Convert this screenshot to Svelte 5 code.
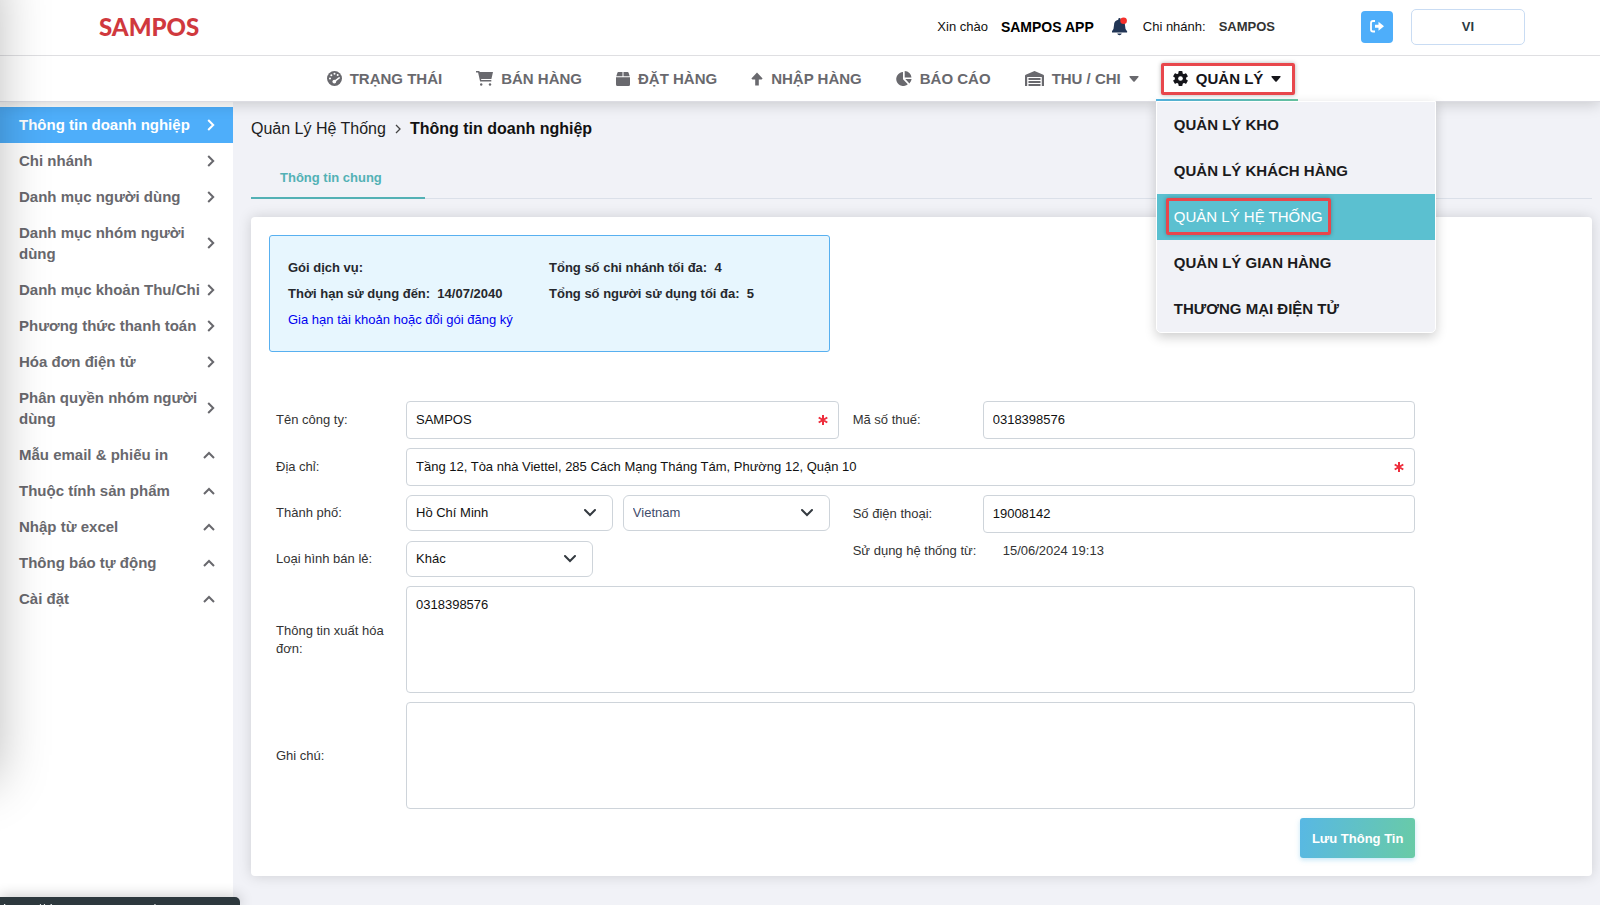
<script>
  const navItems = [
    { label: 'TRẠNG THÁI', icon: 'gauge' },
    { label: 'BÁN HÀNG', icon: 'cart' },
    { label: 'ĐẶT HÀNG', icon: 'box' },
    { label: 'NHẬP HÀNG', icon: 'up' },
    { label: 'BÁO CÁO', icon: 'pie' },
    { label: 'THU / CHI', icon: 'warehouse', caret: true }
  ];

  const manageItems = [
    'QUẢN LÝ KHO',
    'QUẢN LÝ KHÁCH HÀNG',
    'QUẢN LÝ HỆ THỐNG',
    'QUẢN LÝ GIAN HÀNG',
    'THƯƠNG MẠI ĐIỆN TỬ'
  ];

  const sideLinks = [
    'Thông tin doanh nghiệp',
    'Chi nhánh',
    'Danh mục người dùng',
    'Danh mục nhóm người dùng',
    'Danh mục khoản Thu/Chi',
    'Phương thức thanh toán',
    'Hóa đơn điện tử',
    'Phân quyền nhóm người dùng'
  ];

  const sideGroups = [
    'Mẫu email & phiếu in',
    'Thuộc tính sản phẩm',
    'Nhập từ excel',
    'Thông báo tự động',
    'Cài đặt'
  ];

  let menuOpen = $state(true);
  let activeManage = $state('QUẢN LÝ HỆ THỐNG');
  let activeSide = $state('Thông tin doanh nghiệp');

  let form = $state({
    company: 'SAMPOS',
    tax: '0318398576',
    address: 'Tầng 12, Tòa nhà Viettel, 285 Cách Mạng Tháng Tám, Phường 12, Quận 10',
    city: 'Hồ Chí Minh',
    country: 'Vietnam',
    phone: '19008142',
    retail: 'Khác',
    invoice: '0318398576',
    note: ''
  });
</script>

{#snippet icon(name)}
  {#if name === 'gauge'}
    <svg class="icon" width="15" height="15" viewBox="0 0 16 16" aria-hidden="true">
      <circle cx="8" cy="8" r="8" fill="currentColor" />
      <g fill="#fff">
        <circle cx="3.2" cy="8" r="1.1" />
        <circle cx="4.6" cy="4.5" r="1.1" />
        <circle cx="8" cy="3" r="1.1" />
        <circle cx="11.4" cy="4.3" r="1.1" />
        <circle cx="7.8" cy="11.3" r="2" />
      </g>
      <path d="M8 11l5-3.6" stroke="#fff" stroke-width="1.7" stroke-linecap="round" />
    </svg>
  {:else if name === 'cart'}
    <svg class="icon" width="17" height="15" viewBox="0 0 17 15" fill="currentColor" aria-hidden="true">
      <path d="M0 0h3.3l.4 1H17l-1.6 6.9H5l.3 1.2h10v1.5H4.1l-2-9.1H0z" />
      <circle cx="5.2" cy="13.5" r="1.2" />
      <circle cx="14" cy="13.5" r="1.2" />
    </svg>
  {:else if name === 'box'}
    <svg class="icon" width="14" height="14" viewBox="0 0 14 14" fill="currentColor" aria-hidden="true">
      <path d="M2.3 0h4.2v4.2H.3L1.4.8Q1.7 0 2.3 0zM7.5 0h4.2q.6 0 .9.8l1.1 3.4H7.5zM0 5.2h14v7.3q0 1.5-1.5 1.5h-11Q0 14 0 12.5z" />
    </svg>
  {:else if name === 'up'}
    <svg class="icon" width="12" height="14" viewBox="0 0 12 14" fill="currentColor" aria-hidden="true">
      <path d="M6 .6l5.6 5.8-1 1H7.8v6H4.2v-6H1.4l-1-1z" />
    </svg>
  {:else if name === 'pie'}
    <svg class="icon" width="16" height="15" viewBox="0 0 16 15" fill="currentColor" aria-hidden="true">
      <path d="M7 1v7.3l4.8 5A7 7 0 1 1 7 1zM8.7 0a6.8 6.8 0 0 1 6.8 6.6H8.7zM9.3 8h6.3a7 7 0 0 1-2.2 4.4z" />
    </svg>
  {:else if name === 'warehouse'}
    <svg class="icon" width="19" height="15" viewBox="0 0 19 15" fill="currentColor" aria-hidden="true">
      <path d="M9.5 0l8.8 3.7q.7.3.7 1V15h-2.2V6H2.2v9H0V4.7q0-.7.7-1z" />
      <path d="M3.5 7h12v2h-12zM3.5 10h12v2h-12zM3.5 13h12v2h-12z" />
    </svg>
  {:else if name === 'gear'}
    <svg class="icon" width="15" height="15" viewBox="0 0 16 16" aria-hidden="true">
      <g fill="currentColor">
        {#each [0, 60, 120] as turn}
          <rect x="5.8" y="0" width="4.4" height="16" rx="1" transform="rotate({turn} 8 8)" />
        {/each}
        <circle cx="8" cy="8" r="6" />
      </g>
      <circle cx="8" cy="8" r="2.5" fill="#fff" />
    </svg>
  {:else if name === 'caret'}
    <svg class="icon" width="10" height="6" viewBox="0 0 10 6" fill="currentColor" aria-hidden="true">
      <path d="M1 0h8q1 0 .5 1L5.7 5.5q-.7.7-1.4 0L.5 1Q0 0 1 0z" />
    </svg>
  {:else if name === 'right'}
    <svg class="icon" width="8" height="12" viewBox="0 0 8 12" fill="none" stroke="currentColor" stroke-width="2" aria-hidden="true">
      <path d="M1.2 1l5 5-5 5" />
    </svg>
  {:else if name === 'collapse'}
    <svg class="icon" width="12" height="8" viewBox="0 0 12 8" fill="none" stroke="currentColor" stroke-width="2" aria-hidden="true">
      <path d="M1 7l5-5 5 5" />
    </svg>
  {:else if name === 'down'}
    <svg class="select-arrow" width="12" height="8" viewBox="0 0 12 8" fill="none" stroke="currentColor" stroke-width="2" stroke-linecap="round" aria-hidden="true">
      <path d="M1 1l5 5 5-5" />
    </svg>
  {:else if name === 'required'}
    <svg class="required" width="10" height="10" viewBox="0 0 10 10" stroke="#ee2d3c" stroke-width="2" aria-hidden="true">
      <path d="M5 0v10M.7 2.5l8.6 5M9.3 2.5l-8.6 5" />
    </svg>
  {/if}
{/snippet}

<div class="page">
  <header class="topbar">
    <a class="logo" href="#home">SAMPOS</a>
    <div class="account">
      <span>Xin chào</span>
      <strong class="user">SAMPOS APP</strong>
      <button class="bell" aria-label="Notifications">
        <svg width="16" height="20" viewBox="0 0 16 20" aria-hidden="true">
          <path d="M6.3 2.2q0-1.2 1.2-1.2t1.2 1.2v.6q4.3.8 4.3 5.4 0 4 1.900 5.700.5.600.1 1.600H0q-.4-1 .1-1.600Q2 12.200 2 8.200q0-4.600 4.300-5.400zM5.200 16.500h4.600Q9.300 18.300 7.500 18.300t-2.300-1.800z" fill="#213555" />
          <circle cx="11.6" cy="3.8" r="3.3" fill="#f5302b" />
        </svg>
      </button>
      <span>Chi nhánh:</span>
      <strong class="branch">SAMPOS</strong>
    </div>
    <button class="logout" aria-label="Logout">
      <svg width="15" height="13" viewBox="0 0 15 13" aria-hidden="true">
        <path d="M5 1H3Q1 1 1 3v6.5q0 2 2 2h2" fill="none" stroke="#fff" stroke-width="1.8" />
        <path d="M5 4.8h3.5v-3L14 6.3l-5.5 4.5v-3H5z" fill="#fff" />
      </svg>
    </button>
    <button class="lang">VI</button>
  </header>

  <nav class="mainnav">
    {#each navItems as item}
      <a class="nav-item" href="#nav">
        {@render icon(item.icon)}
        <span>{item.label}</span>
        {#if item.caret}{@render icon('caret')}{/if}
      </a>
    {/each}
    <div class="manage">
      <button class="nav-item current" onclick={() => (menuOpen = !menuOpen)}>
        {@render icon('gear')}
        <span>QUẢN LÝ</span>
        {@render icon('caret')}
      </button>
      {#if menuOpen}
        <div class="dropdown">
          {#each manageItems as item}
            <a href="#manage" class:active={item === activeManage} onclick={() => (activeManage = item)}>
              <span>{item}</span>
            </a>
          {/each}
        </div>
      {/if}
    </div>
  </nav>

  <div class="body">
    <aside class="sidebar">
      {#each sideLinks as item}
        <a class="side-item" class:active={item === activeSide} href="#side" onclick={() => (activeSide = item)}>
          <span>{item}</span>
          {@render icon('right')}
        </a>
      {/each}
      {#each sideGroups as item}
        <button class="side-item">
          <span>{item}</span>
          {@render icon('collapse')}
        </button>
      {/each}
    </aside>

    <main>
      <div class="breadcrumb">
        <span>Quản Lý Hệ Thống</span>
        <svg width="6" height="10" viewBox="0 0 6 10" fill="none" stroke="#444" stroke-width="1.3" aria-hidden="true">
          <path d="M1 1l4 4-4 4" />
        </svg>
        <strong>Thông tin doanh nghiệp</strong>
      </div>

      <div class="tabs">
        <button>Thông tin chung</button>
      </div>

      <section class="card">
        <div class="plan">
          <div>Gói dịch vụ:</div>
          <div>Tổng số chi nhánh tối đa:&nbsp; 4</div>
          <div>Thời hạn sử dụng đến:&nbsp; 14/07/2040</div>
          <div>Tổng số người sử dụng tối đa:&nbsp; 5</div>
          <a href="#renew">Gia hạn tài khoản hoặc đổi gói đăng ký</a>
        </div>

        <form onsubmit={(e) => e.preventDefault()}>
          <div class="halves">
            <div class="row">
              <label for="company">Tên công ty:</label>
              <div class="field">
                <input id="company" type="text" bind:value={form.company} />
                {@render icon('required')}
              </div>
            </div>
            <div class="row">
              <label for="tax">Mã số thuế:</label>
              <div class="field"><input id="tax" type="text" bind:value={form.tax} /></div>
            </div>
          </div>

          <div class="row">
            <label for="address">Địa chỉ:</label>
            <div class="field">
              <input id="address" type="text" bind:value={form.address} />
              {@render icon('required')}
            </div>
          </div>

          <div class="halves">
            <div class="stack">
              <div class="row">
                <label for="city">Thành phố:</label>
                <div class="selects">
                  <div class="field">
                    <select id="city" bind:value={form.city}><option>Hồ Chí Minh</option></select>
                    {@render icon('down')}
                  </div>
                  <div class="field">
                    <select class="country" aria-label="Quốc gia" bind:value={form.country}><option>Vietnam</option></select>
                    {@render icon('down')}
                  </div>
                </div>
              </div>
              <div class="row">
                <label for="retail">Loại hình bán lẻ:</label>
                <div class="field retail">
                  <select id="retail" bind:value={form.retail}><option>Khác</option></select>
                  {@render icon('down')}
                </div>
              </div>
            </div>
            <div class="stack">
              <div class="row">
                <label for="phone">Số điện thoại:</label>
                <div class="field"><input id="phone" type="text" bind:value={form.phone} /></div>
              </div>
              <div class="row since">
                <span class="since-label">Sử dụng hệ thống từ:</span>
                <span>15/06/2024 19:13</span>
              </div>
            </div>
          </div>

          <div class="row">
            <label for="invoice">Thông tin xuất hóa đơn:</label>
            <div class="field"><textarea id="invoice" bind:value={form.invoice}></textarea></div>
          </div>
          <div class="row">
            <label for="note">Ghi chú:</label>
            <div class="field"><textarea id="note" bind:value={form.note}></textarea></div>
          </div>

          <button class="save">Lưu Thông Tin</button>
        </form>
      </section>
    </main>
  </div>

  <div class="edge-shadow"></div>
  <div class="status">https://demo.sampos.vn/system</div>
</div>

<style>
  :global(body) {
    background: #f1f2f7;
  }

  .page {
    font-family: 'Liberation Sans', Arial, sans-serif;
    font-size: 13px;
    color: #333;
    min-height: 100vh;
    display: flex;
    flex-direction: column;
  }

  .page * {
    box-sizing: border-box;
  }

  a {
    color: inherit;
    text-decoration: none;
  }

  button {
    font: inherit;
    color: inherit;
    border: none;
    background: none;
    padding: 0;
    cursor: pointer;
  }

  .icon {
    flex: none;
  }

  .topbar {
    position: relative;
    z-index: 3;
    height: 56px;
    display: flex;
    align-items: center;
    background: #fff;
    border-bottom: 1px solid #dfdfe2;
    padding: 0 75px 2px 99px;
  }

  .logo {
    font-family: Lato, sans-serif;
    font-size: 24px;
    font-weight: 900;
    color: #d0393e;
  }

  .account {
    display: flex;
    align-items: center;
    gap: 13px;
    margin-left: auto;
    margin-right: 86px;
    color: #111;
  }

  .user {
    color: #000;
    font-size: 14px;
  }

  .bell {
    display: flex;
    padding: 0 2px 0 5px;
  }

  .branch {
    color: #333;
  }

  .logout {
    width: 32px;
    height: 32px;
    display: flex;
    align-items: center;
    justify-content: center;
    background: #4eaefa;
    border-radius: 4px;
    margin-right: 18px;
  }

  .lang {
    width: 114px;
    height: 36px;
    border: 1px solid #c9dcf3;
    border-radius: 5px;
    font-weight: bold;
    color: #2b3a42;
  }

  .mainnav {
    position: relative;
    z-index: 2;
    height: 46px;
    display: flex;
    justify-content: center;
    background: #fff;
    border-bottom: 1px solid #dcdce2;
    box-shadow: 0 2px 14px rgba(0, 0, 0, 0.18);
    padding-left: 8px;
  }

  .nav-item {
    display: flex;
    align-items: center;
    gap: 8px;
    padding: 0 17px;
    height: 45px;
    font-size: 15px;
    font-weight: bold;
    color: #69696e;
    white-space: nowrap;
  }

  .manage {
    position: relative;
  }

  .nav-item.current {
    position: relative;
    color: #15151a;
  }

  .nav-item.current::before {
    content: '';
    position: absolute;
    left: 0;
    right: 0;
    bottom: 0;
    height: 2px;
    background: linear-gradient(90deg, #55b7e4, #68c9a5);
  }

  .nav-item.current::after {
    content: '';
    position: absolute;
    inset: 7px 3px 6px 5px;
    border: 3px solid #e8474c;
    border-radius: 2px;
    box-shadow: 0 0 4px rgba(0, 0, 0, 0.3);
  }

  .dropdown {
    position: absolute;
    top: 100%;
    left: 0;
    width: 280px;
    background: #f1f2f7;
    border: 1px solid #fff;
    border-radius: 0 0 5px 5px;
    box-shadow: 0 4px 12px rgba(0, 0, 0, 0.2);
  }

  .dropdown a {
    display: flex;
    align-items: center;
    height: 46px;
    padding: 0 0 2px 17px;
    font-size: 15px;
    font-weight: bold;
    color: #1b1b20;
  }

  .dropdown a.active {
    background: #5bc0d0;
    color: #fff;
    font-weight: normal;
  }

  .dropdown a.active span {
    position: relative;
  }

  .dropdown a.active span::after {
    content: '';
    position: absolute;
    inset: -10px -8px;
    border: 3px solid #e8474c;
    border-radius: 2px;
    box-shadow: 0 0 4px rgba(0, 0, 0, 0.3);
  }

  .body {
    flex: 1;
    display: flex;
  }

  .sidebar {
    width: 233px;
    flex: none;
    background: #fff;
    padding-top: 5px;
  }

  .side-item {
    width: 100%;
    min-height: 36px;
    display: flex;
    align-items: center;
    justify-content: space-between;
    gap: 4px;
    padding: 7px 18px 8px 19px;
    font-size: 15px;
    line-height: 21px;
    font-weight: bold;
    color: #68686d;
    text-align: left;
  }

  .side-item.active {
    background: #4eaefa;
    color: #fff;
  }

  main {
    flex: 1;
    min-width: 0;
    padding: 17px 8px 24px 18px;
  }

  .breadcrumb {
    display: flex;
    align-items: center;
    gap: 9px;
    font-size: 16px;
    line-height: 20px;
    color: #1d1d22;
  }

  .breadcrumb strong {
    color: #111;
  }

  .tabs {
    display: flex;
    margin-top: 20px;
    border-bottom: 1px solid #dbe0e9;
  }

  .tabs button {
    height: 40px;
    padding: 0 43px 2px 29px;
    margin-bottom: -1px;
    border-bottom: 2px solid #53b1b5;
    font-weight: bold;
    color: #53b1b5;
  }

  .card {
    margin-top: 18px;
    background: #fff;
    border-radius: 4px;
    box-shadow: 0 0 14px rgba(0, 0, 0, 0.15);
    padding: 18px;
  }

  .plan {
    width: 43%;
    height: 117px;
    display: grid;
    grid-template-columns: 261px 1fr;
    align-content: start;
    row-gap: 6px;
    padding: 22px 18px;
    background: #e7f6fe;
    border: 1px solid #58b0f0;
    border-radius: 3px;
    line-height: 20px;
    font-weight: bold;
    color: #26282d;
  }

  .plan a {
    grid-column: 1 / -1;
    color: #0000f0;
    font-weight: normal;
  }

  form {
    width: 88%;
    display: flex;
    flex-direction: column;
    gap: 9px;
    margin-top: 49px;
    padding: 0 2px 0 7px;
  }

  .halves {
    display: grid;
    grid-template-columns: 1fr 1fr;
    gap: 14px;
  }

  .stack {
    display: flex;
    flex-direction: column;
    gap: 10px;
  }

  .row {
    display: flex;
    align-items: center;
  }

  label {
    width: 130px;
    flex: none;
    padding-right: 12px;
    line-height: 18px;
  }

  .field {
    position: relative;
    flex: 1;
    display: flex;
  }

  .selects {
    flex: 1;
    display: flex;
    gap: 10px;
    padding-right: 9px;
  }

  .retail {
    flex: none;
    width: 187px;
  }

  input,
  select,
  textarea {
    width: 100%;
    font: inherit;
    color: #111;
    background: #fff;
    border: 1px solid #ced4da;
    border-radius: 4px;
    padding: 0 9px;
    outline: none;
  }

  input {
    height: 38px;
    padding-bottom: 1px;
  }

  select {
    height: 36px;
    border-radius: 6px;
    appearance: none;
    padding-bottom: 1px;
  }

  .country {
    color: #3f4d6b;
  }

  textarea {
    display: block;
    height: 107px;
    padding-top: 10px;
    resize: none;
  }

  .field :global(.required) {
    position: absolute;
    right: 11px;
    top: 14px;
  }

  .field :global(.select-arrow) {
    position: absolute;
    right: 17px;
    top: 14px;
    color: #343a40;
    pointer-events: none;
  }

  .since {
    line-height: 16px;
  }

  .since-label {
    width: 150px;
    flex: none;
  }

  .save {
    align-self: flex-end;
    height: 40px;
    padding: 0 12px;
    border-radius: 3px;
    background: linear-gradient(100deg, #58b8e4, #69cba6);
    box-shadow: 0 2px 5px rgba(88, 184, 228, 0.35);
    color: #fff;
    font-weight: bold;
  }

  /* shadow of the off-canvas drawer */
  .edge-shadow {
    position: fixed;
    z-index: 4;
    left: -200px;
    top: -30px;
    width: 195px;
    height: 810px;
    box-shadow: 0 0 50px rgba(0, 0, 0, 0.3);
    pointer-events: none;
  }

  .status {
    position: fixed;
    z-index: 4;
    left: 0;
    bottom: 0;
    width: 240px;
    height: 8px;
    overflow: hidden;
    padding: 4px 3px 0;
    background: #2d383d;
    border-radius: 0 5px 0 0;
    box-shadow: 0 0 14px rgba(0, 0, 0, 0.3);
    color: #e4e8ea;
    font-size: 14px;
    line-height: 18px;
  }
</style>
